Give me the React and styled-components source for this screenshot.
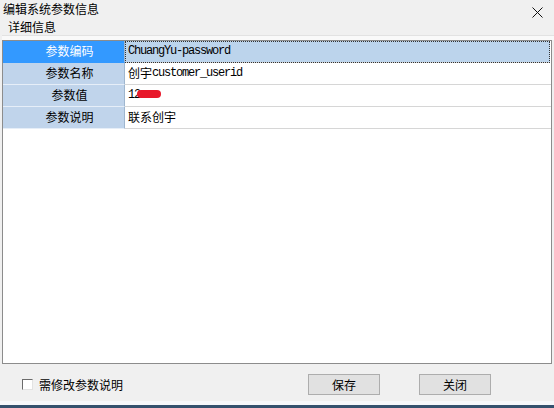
import { Fragment } from "react";
import styled, { createGlobalStyle } from "styled-components";

const Global = createGlobalStyle`
  html, body {
    margin: 0;
    padding: 0;
    background: #f0f0f0;
  }
  body {
    font-family: "Noto Sans CJK SC", "Liberation Sans", sans-serif;
    font-size: 12px;
    color: #000;
  }
`

const Window = styled.div`
  width: 554px;
  height: 408px;
  display: flex;
  flex-direction: column;
  background: #f0f0f0;
  overflow: hidden;
`
const TitleBar = styled.div`
  height: 18px;
  display: flex;
  align-items: center;
  justify-content: space-between;
  padding: 0 11px 0 3px;
  line-height: 18px;
  font-size: 12px;
`
const CloseBtn = styled.div`
  display: flex;
  align-items: center;
  margin-top: 6px;
`
const SectionLabel = styled.div`
  height: 15px;
  line-height: 15px;
  padding-left: 8px;
  margin-top: 1px;
`
const TabEdge = styled.div`
  height: 4px;
  margin: 1px 0 0 2px;
  border-top: 1px solid #e2e2e2;
  background: #f9f9f9;
`
const GridFrame = styled.div`
  margin: 0 2px;
  height: 324px;
  border: 1px solid #8c8c8c;
  background: #fff;
  display: grid;
  grid-template-columns: 122px 1fr;
  grid-auto-rows: 22px;
  align-content: start;
`
const LabelCell = styled.div`
  background: ${p => (p.$selected ? "#3399ff" : "#c0d4eb")};
  color: ${p => (p.$selected ? "#fff" : "#000")};
  border-bottom: 1px solid ${p => (p.$selected ? "#3399ff" : "#e6eef8")};
  border-right: 1px solid #9fb6cf;
  display: flex;
  align-items: center;
  justify-content: center;
  padding-left: 12px;
  line-height: 20px;
`
const ValueCell = styled.div`
  background: ${p => (p.$selected ? "#bcd4ec" : "#fff")};
  border-bottom: 1px solid #d6d6d6;
  outline: ${p => (p.$selected ? "1px dotted #333" : "none")};
  outline-offset: -1px;
  margin-right: ${p => (p.$selected ? "1px" : "0")};
  display: flex;
  align-items: center;
  padding-left: 3px;
  line-height: 20px;
  position: relative;
  white-space: nowrap;
`
const Latin = styled.span`
  font-family: "Liberation Mono", "DejaVu Sans Mono", monospace;
  font-size: 12px;
  letter-spacing: -1.2px;
`
const Redact = styled.span`
  position: absolute;
  left: 12px;
  top: 5px;
  width: 24px;
  height: 8px;
  border-radius: 4px;
  background: #e8182a;
`
const Footer = styled.div`
  height: 37px;
  display: flex;
  align-items: center;
  padding: 0 63px 0 22px;
`
const CheckRow = styled.label`
  display: flex;
  align-items: center;
  gap: 6px;
  margin-right: auto;
  margin-top: 4px;
`
const CheckBox = styled.span`
  width: 9px;
  height: 9px;
  background: #fff;
  border-top: 1px solid #6b6b6b;
  border-left: 1px solid #6b6b6b;
  border-right: 1px solid #e2e2e2;
  border-bottom: 1px solid #e2e2e2;
`
const Buttons = styled.div`
  display: flex;
  gap: 39px;
  margin-top: 4px;
`
const Button = styled.button`
  width: 72px;
  height: 21px;
  padding: 0;
  background: #e1e1e1;
  border: 1px solid #adadad;
  font-family: inherit;
  font-size: 12px;
  line-height: 19px;
  color: #000;
`
const BottomEdge = styled.div`
  margin-top: auto;
  height: 7px;
  border-top: 4px solid #f6f8fb;
  background: #34516e;
  box-sizing: border-box;
`

const rows = [
  { label: "参数编码", value: <Latin>ChuangYu-password</Latin>, selected: true },
  { label: "参数名称", value: <>创宇<Latin>customer_userid</Latin></> },
  { label: "参数值", value: <><Latin>12</Latin><Redact /></> },
  { label: "参数说明", value: "联系创宇" },
]

const App = () => {
  return (
    <Window>
      <Global />
      <TitleBar>
        <span>编辑系统参数信息</span>
        <CloseBtn>
          <svg width="11" height="11" viewBox="0 0 11 11">
            <path d="M0.5 0.5 L10.5 10.5 M10.5 0.5 L0.5 10.5" stroke="#111" strokeWidth="1" />
          </svg>
        </CloseBtn>
      </TitleBar>
      <SectionLabel>详细信息</SectionLabel>
      <TabEdge />
      <GridFrame>
        {rows.map(r => (
          <Fragment key={r.label}>
            <LabelCell $selected={r.selected}>{r.label}</LabelCell>
            <ValueCell $selected={r.selected}>{r.value}</ValueCell>
          </Fragment>
        ))}
      </GridFrame>
      <Footer>
        <CheckRow>
          <CheckBox />
          <span>需修改参数说明</span>
        </CheckRow>
        <Buttons>
          <Button>保存</Button>
          <Button>关闭</Button>
        </Buttons>
      </Footer>
      <BottomEdge />
    </Window>
  );
};

export default App;
